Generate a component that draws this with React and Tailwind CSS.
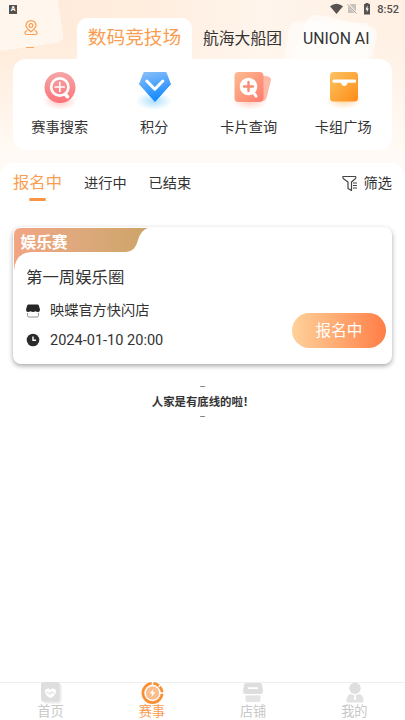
import React, { useState } from 'react';

const gameTabs = ['航海大船团', 'UNION AI'];

const SearchIcon = () => (
  <svg width="48" height="44" viewBox="0 0 48 44">
    <defs>
      <linearGradient id="search" x1="0" y1="0" x2="0" y2="1">
        <stop offset="0" stopColor="#f5a6a6" />
        <stop offset="1" stopColor="#fd7379" />
      </linearGradient>
      <radialGradient id="searchGlow">
        <stop offset="0" stopColor="#fd8a8a" stopOpacity=".5" />
        <stop offset="1" stopColor="#fd8a8a" stopOpacity="0" />
      </radialGradient>
    </defs>
    <ellipse cx="24" cy="33" rx="17" ry="9" fill="url(#searchGlow)" />
    <circle cx="24" cy="19.5" r="15.5" fill="url(#search)" />
    <circle cx="23.8" cy="19" r="8.6" fill="none" stroke="#fff" strokeWidth="2.7" />
    <path d="M23.8 14.5v9M19.3 19h9" stroke="#fff" strokeWidth="1.7" strokeLinecap="round" />
    <path d="M29.500 26.500l2 2.200" stroke="#fff" strokeWidth="3.600" strokeLinecap="round" />
  </svg>
);

const PointsIcon = () => (
  <svg width="48" height="44" viewBox="0 0 48 44">
    <defs>
      <linearGradient id="points" x1="0" y1="0" x2="0.3" y2="1">
        <stop offset="0" stopColor="#8cc0f8" />
        <stop offset="1" stopColor="#168aff" />
      </linearGradient>
      <radialGradient id="pointsGlow">
        <stop offset="0" stopColor="#69c6ff" stopOpacity=".55" />
        <stop offset="1" stopColor="#69c6ff" stopOpacity="0" />
      </radialGradient>
    </defs>
    <ellipse cx="24" cy="33" rx="18" ry="9" fill="url(#pointsGlow)" />
    <path d="M14 4.500h22l4.500 11.700L25 33.500 9.500 16.200z" fill="url(#points)" stroke="url(#points)" strokeWidth="1" strokeLinejoin="round" />
    <path d="M16.800 13l8 8.200 8-8.200" fill="none" stroke="#fff" strokeWidth="3" strokeLinecap="round" strokeLinejoin="round" />
  </svg>
);

const CardsIcon = () => (
  <svg width="48" height="44" viewBox="0 0 48 44">
    <defs>
      <linearGradient id="cards" x1="0" y1="0" x2="1" y2="1">
        <stop offset="0" stopColor="#fcbb8e" />
        <stop offset="1" stopColor="#ff7c70" />
      </linearGradient>
      <radialGradient id="cardsGlow">
        <stop offset="0" stopColor="#ff9a7a" stopOpacity=".5" />
        <stop offset="1" stopColor="#ff9a7a" stopOpacity="0" />
      </radialGradient>
    </defs>
    <ellipse cx="25" cy="33" rx="18" ry="9" fill="url(#cardsGlow)" />
    <path d="M30 8h11.500q5 1 4.500 4l-4.500 18q-1 3-4 3H30z" fill="#fdb9a8" />
    <rect x="9.500" y="4" width="29" height="30" rx="4" fill="url(#cards)" />
    <circle cx="23.500" cy="18.500" r="8.800" fill="#fff" />
    <path d="M28.500 24.500l2.500 3.600" stroke="#fff" strokeWidth="3" strokeLinecap="round" />
    <path d="M23.500 14v9M19 18.500h9" stroke="#f98c74" strokeWidth="2.400" strokeLinecap="round" />
  </svg>
);

const DeckIcon = () => (
  <svg width="48" height="44" viewBox="0 0 48 44">
    <defs>
      <linearGradient id="deck" x1="0" y1="0" x2="1" y2="1">
        <stop offset="0" stopColor="#fbc463" />
        <stop offset="1" stopColor="#ff8c17" />
      </linearGradient>
      <radialGradient id="deckGlow">
        <stop offset="0" stopColor="#ffad4a" stopOpacity=".5" />
        <stop offset="1" stopColor="#ffad4a" stopOpacity="0" />
      </radialGradient>
    </defs>
    <ellipse cx="25" cy="32" rx="18" ry="9" fill="url(#deckGlow)" />
    <rect x="11" y="4" width="28" height="29.500" rx="3.500" fill="url(#deck)" />
    <path d="M14.600 11.500h21.400q1 0 1 1v1.300q0 1-1 1h-6.500q-1 0-1.400 1.200a3 3 0 0 1-5.600 0q-.4-1.200-1.400-1.200h-6.500q-1 0-1-1v-1.300q0-1 1-1z" fill="#fff" />
  </svg>
);

const shortcuts = [
  { label: '赛事搜索', icon: SearchIcon },
  { label: '积分', icon: PointsIcon },
  { label: '卡片查询', icon: CardsIcon },
  { label: '卡组广场', icon: DeckIcon }
];

const HomeIcon = () => (
  <svg width="22" height="22" viewBox="0 0 22 22">
    <path d="M4 0h14l3.500 3v16l-2 2.500H5l-3-3V2z" fill="#ebebeb" />
    <rect x="1" y="0" width="18.500" height="19.500" rx="3" fill="#dedede" />
    <path d="M10.500 16.300C7 14 5 12.300 5 9.500c0-3 3.700-4 5.500-1.500C12.300 5.500 16 6.500 16 9.500c0 2.800-2 4.500-5.500 6.800z" fill="#fff" />
    <path d="M6.500 10.500h2l1.500 2 1.500-3 1 1.500h2" fill="none" stroke="#d6d6d6" strokeWidth=".9" />
  </svg>
);

const EventIcon = () => (
  <svg width="24" height="24" viewBox="0 0 24 24">
    <circle cx="12.500" cy="12" r="9.600" fill="none" stroke="#f98f33" strokeWidth="2.700" />
    <path d="M12.500 0v4M20 12h4M18.800 5.700l3-3" stroke="#fff" strokeWidth="1.600" />
    <circle cx="12.500" cy="12" r="6.700" fill="#fdbd8c" />
    <path d="M13.700 7.800l-4 4.800h2.600l-1 3.600 4.200-5h-2.700z" fill="#fff" />
  </svg>
);

const ShopIcon = () => (
  <svg width="22" height="22" viewBox="0 0 22 22">
    <path d="M4 1h14q1.500 0 2 1.500l1 6q0 3.500-2.500 3.500H3.500Q1 12 1 8.500l1-6Q2.500 1 4 1z" fill="#dedede" />
    <rect x="6" y="5.300" width="10" height="1.700" rx=".8" fill="#fff" />
    <path d="M3.500 13q2 1 3.700 0 2 1 3.800 0 2 1 3.800 0 2 1 3.700 0v5q0 2-2 2h-11q-2 0-2-2z" fill="#e4e4e4" />
  </svg>
);

const MineIcon = () => (
  <svg width="22" height="22" viewBox="0 0 22 22">
    <circle cx="12" cy="6.300" r="5.700" fill="#dedede" />
    <path d="M7.500 12q-4 1.500-4 7 0 1.500 1.500 1.500h14q1.500 0 1.500-1.500 0-5.500-4-7-4.500 2-9 0z" fill="#e2e2e2" />
    <path d="M12 12.500l1 1-.4 1 .8 2.200-1.400 1.700-1.400-1.700.8-2.200-.4-1z" fill="#fff" />
  </svg>
);

const navItems = [
  { label: '首页', icon: HomeIcon },
  { label: '赛事', icon: EventIcon },
  { label: '店铺', icon: ShopIcon },
  { label: '我的', icon: MineIcon }
];

const HeaderBackground = () => (
  <svg className="absolute inset-0" width="405" height="180" viewBox="0 0 405 180">
    <defs>
      <linearGradient id="sky" x1="0" y1="0" x2="1" y2="0">
        <stop offset="0" stopColor="#ffead8" />
        <stop offset=".35" stopColor="#ffedde" />
        <stop offset=".65" stopColor="#fff5ec" />
        <stop offset="1" stopColor="#fff0e3" />
      </linearGradient>
      <linearGradient id="fade" x1="0" y1="0" x2="0" y2="1">
        <stop offset=".2" stopColor="#fffaf5" stopOpacity="0" />
        <stop offset=".85" stopColor="#fffaf5" />
      </linearGradient>
    </defs>
    <rect width="405" height="180" fill="url(#sky)" />
    <path d="M0 0h58l5 34q1 7-6 9L0 51z" fill="#fff6ee" />
    <path d="M283 62l6-32q2-8 9-9l70 2v39z" fill="#fff" fillOpacity=".5" />
    <path d="M303 28l5-8q3-6 11-5l51 11q7 2 7 9l-6 27h-80z" fill="#fff" fillOpacity=".6" />
    <rect width="405" height="180" fill="url(#fade)" />
  </svg>
);

const StatusBar = () => (
  <div className="flex h-[18px] items-center justify-between pl-[9px] pr-[6px]">
    <span className="flex h-[9px] w-2 items-center justify-center bg-[#55514e] font-['Roboto',sans-serif] text-[7px] font-bold leading-none text-white">A</span>
    <div className="flex items-center">
      <svg width="42" height="12" viewBox="0 0 42 12">
        <path d="M0 3.200Q6.500-1.800 13 3.200L6.500 11z" fill="#575250" />
        <path d="M20 1h6v9h-8V3.500z" fill="#c9c1ba" />
        <path d="M18 1l9 10" stroke="#fff4ea" strokeWidth="2" />
        <path d="M17.500 1.200l9 9.300" stroke="#a8a09a" strokeWidth="1" />
        <path d="M35.500 0h3v1H40v10.500h-6V1h1.500z" fill="#575250" />
        <path d="M37.500 2.500l-2 4h1.300v2.700l2-3.700h-1.300z" fill="#fff" />
      </svg>
      <span className="ml-[5px] font-['Roboto',sans-serif] text-[11px] font-medium leading-none text-[#55504d]">8:52</span>
    </div>
  </div>
);

const App = () => {
  const [activeNav, setActiveNav] = useState('赛事');

  return (
    <div className="flex h-[720px] w-[405px] flex-col overflow-hidden bg-white font-['Roboto','Noto_Sans_CJK_SC',sans-serif] text-[#333]">
      {/* Header */}
      <div className="relative h-[164px] shrink-0">
        <HeaderBackground />
        <div className="relative">
          <StatusBar />
          <div className="flex h-[41px]">
            <div className="flex w-[77px] shrink-0 flex-col pl-6">
              <svg className="mt-0.5" width="14" height="16" viewBox="0 0 14 16" fill="none" stroke="#fa9c4c" strokeWidth="1.200">
                <path d="M7 11.800C4 9.300 2 7.500 2 5.400a5 4.800 0 0 1 10 0c0 2.100-2 3.900-5 6.400z" />
                <circle cx="7" cy="5.500" r="1.900" />
                <path d="M3.500 10.300C-.5 12 .5 14.500 3 14.500h8c2.500 0 3.500-2.500-.5-4.200" />
              </svg>
              <div className="ml-[2px] mt-[11px] h-px w-2 bg-[#f9a766]" />
            </div>
            <div className="w-[115px] shrink-0 rounded-t-[10px] bg-white pt-1.5 text-center text-[18.700px] leading-7 text-[#fa9d50]">
              数码竞技场
            </div>
            <div className="flex gap-[21px] whitespace-nowrap pl-[11px] text-[15.800px] leading-[41px]">
              {gameTabs.map((tab) => (
                <span key={tab}>{tab}</span>
              ))}
            </div>
          </div>
          <div className="mx-[13px] grid h-[91px] grid-cols-4 rounded-[13px] bg-white pr-px pt-[9px]">
            {shortcuts.map(({ label, icon: Icon }) => (
              <div key={label} className="-ml-px flex flex-col items-center">
                <Icon />
                <span className="mt-[5px] text-[14.200px] leading-5">{label}</span>
              </div>
            ))}
          </div>
        </div>
      </div>

      {/* Event list */}
      <div className="relative -mt-px flex-1 rounded-t-[14px] bg-white">
        <div className="flex h-16 px-[13px] pt-2.5 text-[14.200px] leading-5">
          <div className="flex w-[49px] flex-col items-center text-[16.300px] text-[#fa9d50]">
            <span>报名中</span>
            <span className="mt-[5px] h-[3px] w-[17px] rounded-full bg-[#fa9445]" />
          </div>
          <span className="ml-[22px]">进行中</span>
          <span className="ml-[22px]">已结束</span>
          <div className="ml-auto flex h-5 items-center gap-[6px]">
            <svg width="16" height="17" viewBox="0 0 16 17" fill="none" stroke="#444" strokeWidth="1.200" strokeLinejoin="round">
              <path d="M1 1.500h12.500q.8 1-.2 2.200L9.500 7v8.500L6 13.500V7L1.500 3.700Q.5 2.500 1 1.500z" />
              <path d="M11 8h4M11 10.500h4M11 13h4" />
            </svg>
            <span>筛选</span>
          </div>
        </div>

        <div className="relative mx-[13px] h-[137px] rounded-[8px] bg-white shadow-[0_2px_5px_rgba(0,0,0,0.35)]">
          <svg className="absolute left-0 top-0" width="140" height="48" viewBox="0 0 140 48">
            <defs>
              <linearGradient id="ribbon" x1="0" y1="0" x2="1" y2="0">
                <stop offset="0" stopColor="#f2a583" />
                <stop offset=".5" stopColor="#dda97c" />
                <stop offset="1" stopColor="#cda468" />
              </linearGradient>
            </defs>
            <path d="M8 1h127q-7 2-10 12-3 12-12 12H18Q2 26 1 44V8q0-7 7-7z" fill="url(#ribbon)" />
          </svg>
          <div className="relative flex h-full flex-col pl-[13px] pt-[6px]">
            <span className="-ml-[5.500px] text-[15.700px] font-bold leading-5 text-white">娱乐赛</span>
            <span className="mt-[13px] text-[16.400px] leading-6">第一周娱乐圈</span>
            <div className="mt-[11px] flex h-5 items-center gap-[10px] text-[14.200px]">
              <svg width="14" height="14" viewBox="0 0 14 14">
                <path d="M2.500.500h9q1 0 1.300 1L14 5.500q0 2.500-2 2.500-1.500 0-2.500-.8-2.500 1.500-5 0Q3.500 8 2 8 0 8 0 5.500l1.200-4Q1.500.500 2.500.500z" fill="#262626" />
                <path d="M1.500 9v2.500q0 1.500 1.500 1.500h8q1.500 0 1.500-1.500V9" fill="none" stroke="#888" strokeWidth=".9" />
              </svg>
              <span>映蝶官方快闪店</span>
            </div>
            <div className="mt-[10px] flex h-5 items-center gap-[10px] text-[14.550px]">
              <svg className="-mt-0.5" width="14" height="14" viewBox="0 0 14 14">
                <circle cx="7" cy="7" r="6.300" fill="#2b2b2b" />
                <path d="M7 3.500V7.300h3" fill="none" stroke="#fff" strokeWidth="1.400" />
              </svg>
              <span>2024-01-10 20:00</span>
            </div>
          </div>
          <button className="absolute bottom-[16px] right-[6px] h-[35px] w-[94px] rounded-full bg-gradient-to-r from-[#ffd19a] to-[#ff7d45] pt-px text-[15.600px] leading-[35px] text-white">
            报名中
          </button>
        </div>

        <div className="mt-[16px] flex flex-col items-center text-[11.400px] leading-[15px]">
          <span className="h-[15px] text-[7.500px] leading-[14px]">—</span>
          <span className="ml-px font-bold">人家是有底线的啦！</span>
          <span className="h-[15px] text-[7.500px] leading-[14px]">—</span>
        </div>
      </div>

      {/* Bottom navigation */}
      <div className="grid h-[38px] shrink-0 grid-cols-4 border-t border-[#eee] bg-white">
        {navItems.map(({ label, icon: Icon }) => (
          <button key={label} className="flex flex-col items-center" onClick={() => setActiveNav(label)}>
            <span className="flex h-5 items-center justify-center">
              <Icon />
            </span>
            <span className={activeNav === label ? 'text-[13.200px] leading-[17px] text-[#fa9d50]' : 'text-[13.200px] leading-[17px] text-[#c8c8c8]'}>
              {label}
            </span>
          </button>
        ))}
      </div>
    </div>
  );
};

export default App;
